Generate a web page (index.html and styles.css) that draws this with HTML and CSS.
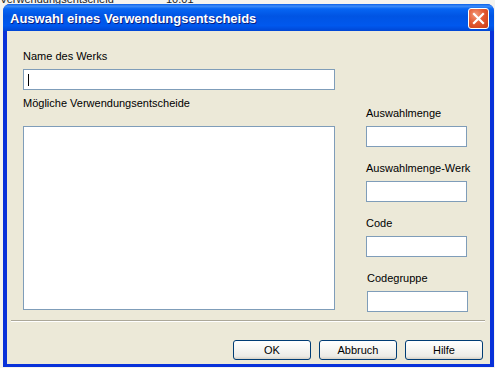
FILE: index.html
```
<!DOCTYPE html>
<html>
<head>
<meta charset="utf-8">
<link rel="stylesheet" href="styles.css">
</head>
<body>
<div class="desktop">
  <div class="behind">
    <span class="behind-text">Verwendungsentscheid</span>
    <span class="behind-num">10.01</span>
  </div>
  <div class="dialog">
    <div class="titlebar">
      <span class="title">Auswahl eines Verwendungsentscheids</span>
      <span class="close">
        <svg width="13" height="13" viewBox="0 0 13 13"><path d="M2 2 L11 11 M11 2 L2 11" stroke="#fff" stroke-width="2.2" stroke-linecap="square"/></svg>
      </span>
    </div>
    <div class="client">
      <div class="main">
        <div class="leftcol">
          <div class="label">Name des Werks</div>
          <div class="input name"><span class="caret"></span></div>
          <div class="label second">Mögliche Verwendungsentscheide</div>
          <div class="listbox"></div>
        </div>
        <div class="rightcol">
          <div class="label">Auswahlmenge</div>
          <div class="input small"></div>
          <div class="label">Auswahlmenge-Werk</div>
          <div class="input small"></div>
          <div class="label">Code</div>
          <div class="input small"></div>
          <div class="label shift">Codegruppe</div>
          <div class="input small shift"></div>
        </div>
      </div>
      <div class="sep"></div>
      <div class="buttons">
        <button class="btn">OK</button>
        <button class="btn">Abbruch</button>
        <button class="btn">Hilfe</button>
      </div>
    </div>
  </div>
</div>
</body>
</html>
```
FILE: styles.css
```
html, body { margin: 0; padding: 0; }
body {
  width: 495px; height: 368px; overflow: hidden;
  background: #fff;
  font-family: "Liberation Sans", Arial, sans-serif;
}
.desktop { position: relative; width: 495px; height: 368px; background: #f4f3ee; }
.behind {
  position: absolute; left: 0; top: 0; width: 495px; height: 10px;
  background: #f4f3ee; overflow: hidden;
}
.behind-text { position: absolute; left: 0; top: -7px; font-size: 11px; line-height: 13px; color: #222; }
.behind-num { position: absolute; left: 166px; top: -7px; font-size: 11px; line-height: 13px; color: #222; }
.dialog {
  position: absolute; left: 3px; top: 4px; width: 491px; height: 363px;
  background: #0831d9;
  border-radius: 7px 7px 0 0;
  display: flex; flex-direction: column;
  box-sizing: border-box;
  padding: 0 4px 3px 4px;
}
.titlebar {
  height: 27px; margin: 0 -4px;
  border-radius: 7px 7px 0 0;
  background: linear-gradient(#0a5fe8 0%, #3d8cf7 8%, #0665f3 18%, #0054e3 45%, #0058ee 80%, #0046d4 100%);
  display: flex; align-items: center;
  padding: 0 5px 0 7px;
}
.title {
  flex: 1;
  color: #fff; font-weight: bold; font-size: 13px;
  text-shadow: 1px 1px 0 #0a1e80;
  font-family: "Liberation Sans", Arial, sans-serif;
  padding-top: 1px;
}
.close {
  width: 19px; height: 19px;
  border: 1px solid #fff; border-radius: 3px;
  background: radial-gradient(circle at 35% 30%, #f29a7a 0%, #e45a32 45%, #c83b15 100%);
  display: flex; align-items: center; justify-content: center;
  margin-top: 1px;
}
.client {
  flex: 1;
  background: #ece9d8;
  display: flex; flex-direction: column;
}
.main {
  display: flex; align-items: flex-start;
  padding: 19px 0 0 16px;
  height: 270px;
  box-sizing: border-box;
}
.leftcol { width: 312px; display: flex; flex-direction: column; }
.rightcol { width: 101px; margin-left: 31px; margin-top: 57px; display: flex; flex-direction: column; }
.label { font-size: 11px; line-height: 13px; height: 13px; color: #000; white-space: nowrap; }
.leftcol .label + .input { margin-top: 6px; }
.label.second { margin-top: 7px; }
.input {
  height: 21px; box-sizing: border-box;
  background: #fff; border: 1px solid #7f9db9;
  position: relative;
}
.input.name { width: 312px; }
.caret { position: absolute; left: 4px; top: 4px; width: 1px; height: 12px; background: #000; }
.listbox {
  margin-top: 16px;
  width: 312px; height: 184px; box-sizing: border-box;
  background: #fff; border: 1px solid #7f9db9;
}
.rightcol .label { margin-bottom: 6px; }
.input.small { width: 101px; margin-bottom: 15px; }
.shift { margin-left: 1px; }
.sep {
  margin: 19px 5px 0 4px;
  height: 1px; background: #aca899; border-bottom: 1px solid #fff;
}
.buttons {
  display: flex; justify-content: flex-end; gap: 8px;
  padding: 18px 7px 0 0;
}
.btn {
  width: 78px; height: 20px; box-sizing: border-box;
  border: 1px solid #003c74; border-radius: 3px;
  background: linear-gradient(#ffffff 0%, #f7f7f4 40%, #ecebe6 85%, #d6d0c5 100%);
  font-family: "Liberation Sans", Arial, sans-serif;
  font-size: 11px; color: #000; padding: 0;
}
```
